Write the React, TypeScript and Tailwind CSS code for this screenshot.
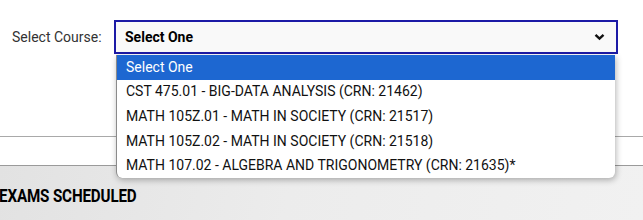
import React from "react";

const options = [
  "Select One",
  "CST 475.01 - BIG-DATA ANALYSIS (CRN: 21462)",
  "MATH 105Z.01 - MATH IN SOCIETY (CRN: 21517)",
  "MATH 105Z.02 - MATH IN SOCIETY (CRN: 21518)",
  "MATH 107.02 - ALGEBRA AND TRIGONOMETRY (CRN: 21635)*",
];

export default function App() {
  return (
    <div
      className="relative w-[643px] h-[220px] overflow-hidden bg-white"
      style={{ fontFamily: "Roboto, 'Liberation Sans', sans-serif" }}
    >
      <div className="flex flex-col h-full">
        <div className="h-[137px] shrink-0 bg-white border-b border-[#a9a9a9] shadow-[0_1px_2px_rgba(0,0,0,0.12)] pt-[20px]">
          <div className="flex items-center">
            <span className="ml-[12px] w-[102px] text-[14px] text-[#333]">Select Course:</span>
            <div className="w-[504px] h-[34px] border-2 border-[#1c1aa6] bg-[#f9f9f9] flex items-center justify-between pl-[9px] pr-[8px]">
              <span className="text-[14px] font-bold text-black">Select One</span>
              <svg width="11" height="8" viewBox="0 0 11 8" className="mr-[3px]">
                <path d="M1.5 1.8 L5.5 5.6 L9.5 1.8" fill="none" stroke="#111" strokeWidth="2.4" />
              </svg>
            </div>
          </div>
        </div>
        <div className="h-[29px] shrink-0 bg-white border-b border-[#9a9a9a]"></div>
        <div className="flex-1 bg-[linear-gradient(100deg,#e2e2e2_0%,#ececec_45%,#f1f1f1_100%)] pt-[20px]">
          <div className="ml-[-1px] origin-left scale-x-[0.8] text-[19px] font-bold text-black tracking-[-0.2px] leading-none">
            EXAMS SCHEDULED
          </div>
        </div>
      </div>

      <div className="absolute left-[116px] top-[55px] w-[499px] bg-white rounded-b-[6px] border-l border-[#8a8a8a] shadow-[1px_2px_6px_rgba(0,0,0,0.3)] overflow-hidden">
        {options.map((o, i) => (
          <div
            key={o}
            className={
              i === 0
                ? "h-[24.6px] flex items-center pl-[9px] text-[14px] bg-[#1d67d1] text-white"
                : "h-[24.6px] flex items-center pl-[9px] text-[14px] text-[#111]"
            }
          >
            {o}
          </div>
        ))}
      </div>
    </div>
  );
}
